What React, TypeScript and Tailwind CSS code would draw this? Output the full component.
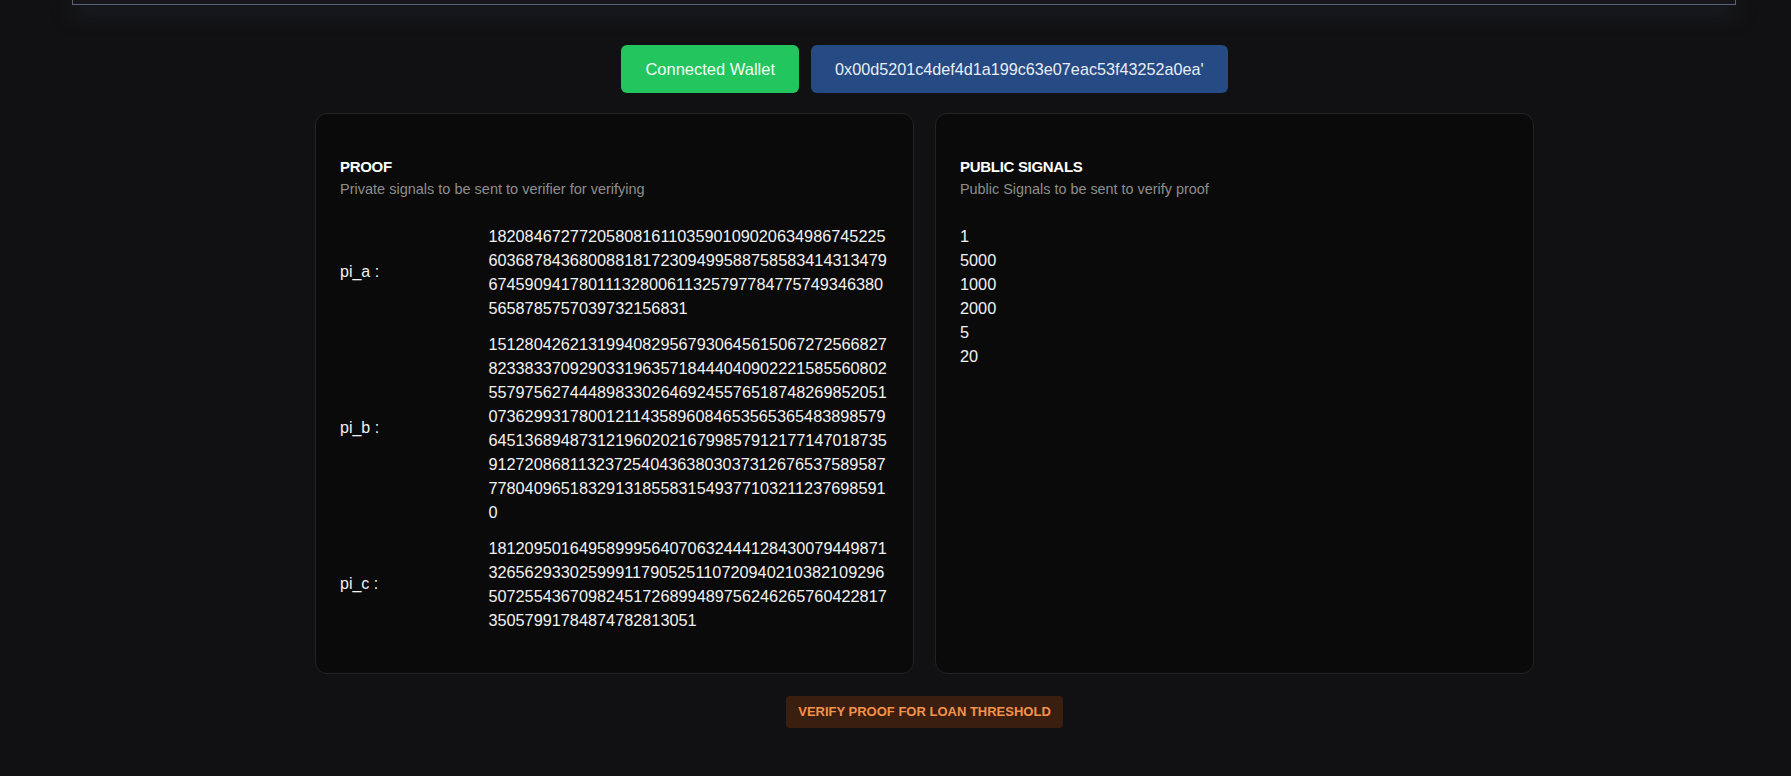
import React from "react";

const font = { fontFamily: '"Liberation Sans", Arial, sans-serif' };

const rows: { label: string; lines: string[] }[] = [
  {
    label: "pi_a :",
    lines: [
      "18208467277205808161103590109020634986745225",
      "60368784368008818172309499588758583414313479",
      "67459094178011132800611325797784775749346380",
      "5658785757039732156831",
    ],
  },
  {
    label: "pi_b :",
    lines: [
      "15128042621319940829567930645615067272566827",
      "82338337092903319635718444040902221585560802",
      "55797562744489833026469245576518748269852051",
      "07362993178001211435896084653565365483898579",
      "64513689487312196020216799857912177147018735",
      "91272086811323725404363803037312676537589587",
      "77804096518329131855831549377103211237698591",
      "0",
    ],
  },
  {
    label: "pi_c :",
    lines: [
      "18120950164958999564070632444128430079449871",
      "32656293302599911790525110720940210382109296",
      "50725543670982451726899489756246265760422817",
      "35057991784874782813051",
    ],
  },
];

const publicSignals = ["1", "5000", "1000", "2000", "5", "20"];

export default function App() {
  return (
    <div className="min-h-screen w-full bg-[#111113] text-white" style={font}>
      <div className="ml-[72px] w-[1664px] h-[5px] bg-[#16161b] border-x border-b border-[#5b6477] shadow-[0_6px_22px_rgba(72,84,108,0.6)]" />
      <div className="pl-[58px] flex flex-col items-center">
        <div className="mt-[40px] flex gap-3">
          <div className="h-12 px-6 flex items-center rounded-md bg-[#22c55e] text-[#f0fdf4] text-[16.5px]">
            Connected Wallet
          </div>
          <div className="h-12 px-6 flex items-center rounded-md bg-[#264a83] text-[#e8edf5] text-[16.2px]">
            0x00d5201c4def4d1a199c63e07eac53f43252a0ea'
          </div>
        </div>

        <div className="mt-5 flex gap-[21px] items-stretch">
          <div className="w-[599px] rounded-xl border border-[#232326] bg-[#0a0a0a] px-6 pt-[41px] pb-[41px]">
            <div className="text-[15px] leading-6 font-bold tracking-[-0.3px] text-white">PROOF</div>
            <div className="text-[14.5px] leading-5 text-[#8e8e8e]">
              Private signals to be sent to verifier for verifying
            </div>
            <div className="mt-[25px] flex flex-col gap-3">
              {rows.map((r) => (
                <div key={r.label} className="flex items-center">
                  <div className="w-[150px] text-base text-[#f2f2f2]">{r.label}</div>
                  <div className="w-[405px] text-[16.3px] leading-6 text-[#f2f2f2]">
                    {r.lines.map((l, i) => (
                      <div key={i}>{l}</div>
                    ))}
                  </div>
                </div>
              ))}
            </div>
          </div>

          <div className="w-[599px] rounded-xl border border-[#232326] bg-[#0a0a0a] px-6 pt-[41px] pb-[41px]">
            <div className="text-[15px] leading-6 font-bold tracking-[-0.3px] text-white">PUBLIC SIGNALS</div>
            <div className="text-[14.4px] leading-5 text-[#8e8e8e]">Public Signals to be sent to verify proof</div>
            <div className="mt-[25px] text-[16.3px] leading-6 text-[#f2f2f2]">
              {publicSignals.map((s, i) => (
                <div key={i}>{s}</div>
              ))}
            </div>
          </div>
        </div>

        <div className="mt-[22px] h-8 px-3 flex items-center rounded bg-[#3a1e10] text-[#f5934b] text-[13px] font-bold">
          VERIFY PROOF FOR LOAN THRESHOLD
        </div>
      </div>
    </div>
  );
}
